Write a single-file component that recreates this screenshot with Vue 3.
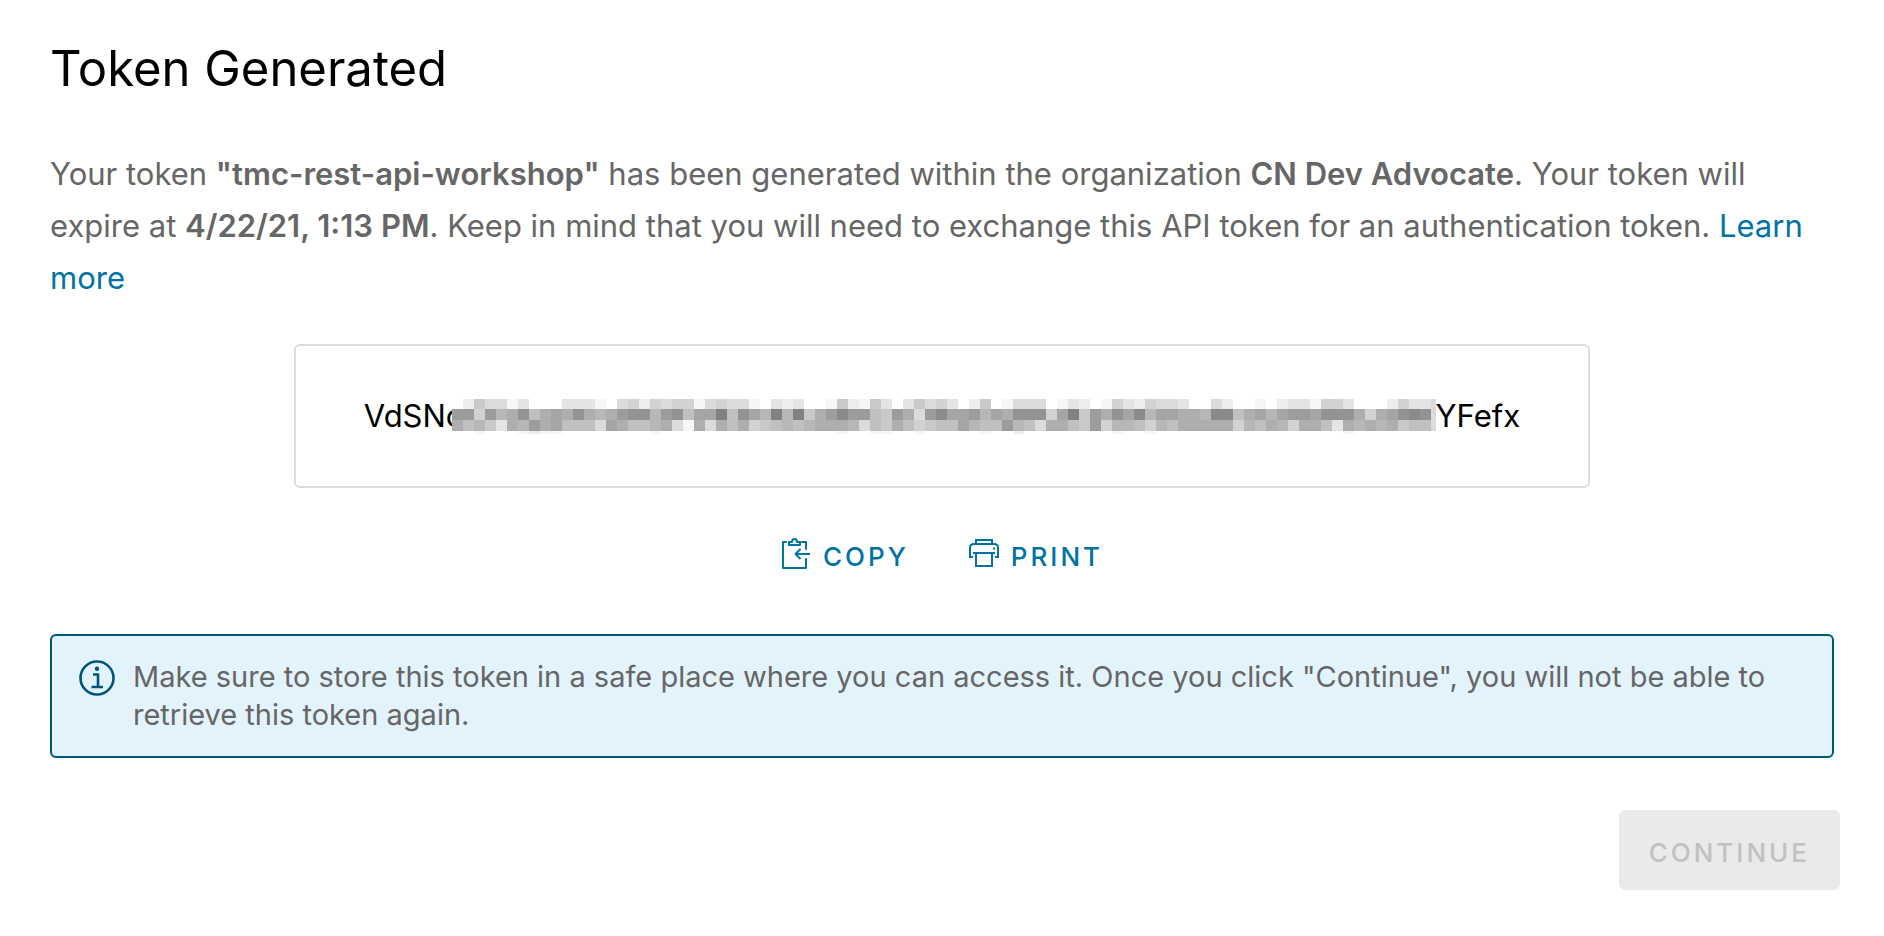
<script setup>
const tokenName = 'tmc-rest-api-workshop'
const organization = 'CN Dev Advocate'
const expiry = '4/22/21, 1:13 PM'

// Darkness of every mosaic cell, one hex digit per cell.
const mosaic = [
  { y: 0, h: 10, cells: '026441300033310452545514544103230016216303645302601444013201532544300420010233155300025334' },
  { y: 10, h: 11, cells: 'bb5b89c79a9c989bcc8bc7aae7ca8e8e69bdbb76b94bdaab8a9ccc5ae6b9cad8aa998dd79a8abbaccc959acdc4' },
  { y: 21, h: 11, cells: '9786398b9a7774a9778941949795678789998476975677a877b8749976b5887587999995879859973989896774' },
  { y: 32, h: 3, cells: '001000121100000000100000000000000001001100100000100200000000100100000000000000000100000000' },
]
const cells = mosaic.flatMap(({ y, h, cells }) =>
  [...cells].map((digit, i) => {
    const shade = 255 - parseInt(digit, 16) * 9
    return { x: i * 11, y, h, fill: `rgb(${shade}, ${shade}, ${shade})` }
  }),
)
</script>

<template>
  <main class="dialog">
    <h1 class="title">Token Generated</h1>

    <p class="intro">
      Your token <strong>"{{ tokenName }}"</strong> has been generated within the organization
      <strong>{{ organization }}</strong>. Your token will expire at <strong>{{ expiry }}</strong>.
      Keep in mind that you will need to exchange this API token for an authentication token.
      <a href="#">Learn more</a>
    </p>

    <div class="token">
      <span>VdSNc</span>
      <svg class="mosaic" viewBox="0 0 984 35" preserveAspectRatio="none" shape-rendering="crispEdges" aria-hidden="true">
        <rect v-for="(c, i) in cells" :key="i" :x="c.x" :y="c.y" width="11" :height="c.h" :fill="c.fill" />
      </svg>
      <span>YFefx</span>
    </div>

    <div class="actions">
      <button class="action" type="button">
        <svg width="30" height="34" viewBox="0 0 30 34" fill="none" stroke="currentColor" stroke-width="2" stroke-linejoin="round" aria-hidden="true">
          <path d="M5 6H2V32H25V23M21 6H25V13" stroke-linecap="round" />
          <path d="M8 9V6H11C11 2 16 2 16 6H19V9Z" />
          <path d="M29 18H15M19.500 13L14.500 18L19.500 23" />
        </svg>
        <span>COPY</span>
      </button>
      <button class="action" type="button">
        <svg width="30" height="34" viewBox="0 0 30 34" fill="none" stroke="currentColor" stroke-width="2" aria-hidden="true">
          <path d="M7 8V4H23V8" />
          <path d="M4 21H1V12Q1 8 5 8H25Q29 8 29 12V21H26" />
          <path d="M4 17H26M7 17V30H23V17" />
          <path d="M24 12.500H26" />
        </svg>
        <span>PRINT</span>
      </button>
    </div>

    <div class="alert" role="status">
      <svg width="36" height="36" viewBox="0 0 36 36" fill="none" stroke="currentColor" stroke-width="2.600" aria-hidden="true">
        <circle cx="18" cy="18" r="16.500" />
        <circle cx="18" cy="8.700" r="2.200" fill="currentColor" stroke="none" />
        <path d="M14 14.500H19V27M12.500 27H24" />
      </svg>
      <p>
        Make sure to store this token in a safe place where you can access it. Once you click
        "Continue", you will not be able to retrieve this token again.
      </p>
    </div>

    <footer class="footer">
      <button class="continue" type="button" disabled>CONTINUE</button>
    </footer>
  </main>
</template>

<style>
body {
  background: #fff;
}
</style>

<style scoped>
.dialog {
  padding: 40px 50px 46px;
  font-family: Inter, "Open Sans", sans-serif;
  color: #666;
}
.title {
  margin: 0 0 50px;
  font-size: 49px;
  line-height: 58px;
  font-weight: 400;
  color: #000;
}
.intro {
  margin: 0 0 40px;
  font-size: 31px;
  line-height: 52px;
}
.intro strong {
  font-weight: 600;
}
.intro a {
  color: #0072a3;
  text-decoration: none;
}
.token {
  display: flex;
  align-items: center;
  justify-content: center;
  width: fit-content;
  height: 144px;
  margin: 0 auto 38px;
  padding: 0 68px;
  box-sizing: border-box;
  border: 2px solid #ddd;
  border-radius: 6px;
  font-size: 31px;
  line-height: 36px;
  color: #000;
}
.mosaic {
  position: relative;
  width: 984px;
  height: 35px;
  margin-left: -12px;
}
.actions {
  display: flex;
  justify-content: center;
  gap: 60px;
  margin-bottom: 48px;
}
.action {
  display: flex;
  align-items: center;
  gap: 12px;
  height: 60px;
  padding: 0;
  border: 0;
  background: none;
  font-family: inherit;
  font-size: 26px;
  font-weight: 500;
  letter-spacing: 3px;
  color: #0072a3;
}
.action svg {
  margin-bottom: 6px;
}
.alert {
  display: flex;
  gap: 18px;
  padding: 22px 60px 22px 27px;
  border: 2px solid #00567a;
  border-radius: 6px;
  background: #e3f3fb;
  color: #00567a;
}
.alert svg {
  flex: none;
  margin-top: 2px;
}
.alert p {
  margin: 0;
  font-size: 29px;
  line-height: 38px;
  color: #666;
}
.footer {
  display: flex;
  justify-content: flex-end;
  margin: 52px -6px 0 0;
}
.continue {
  height: 80px;
  padding: 4px 30px 0;
  border: 0;
  border-radius: 6px;
  background: #eaeaea;
  font-family: inherit;
  font-size: 26px;
  font-weight: 500;
  letter-spacing: 3px;
  color: #c1c1c1;
}
</style>
